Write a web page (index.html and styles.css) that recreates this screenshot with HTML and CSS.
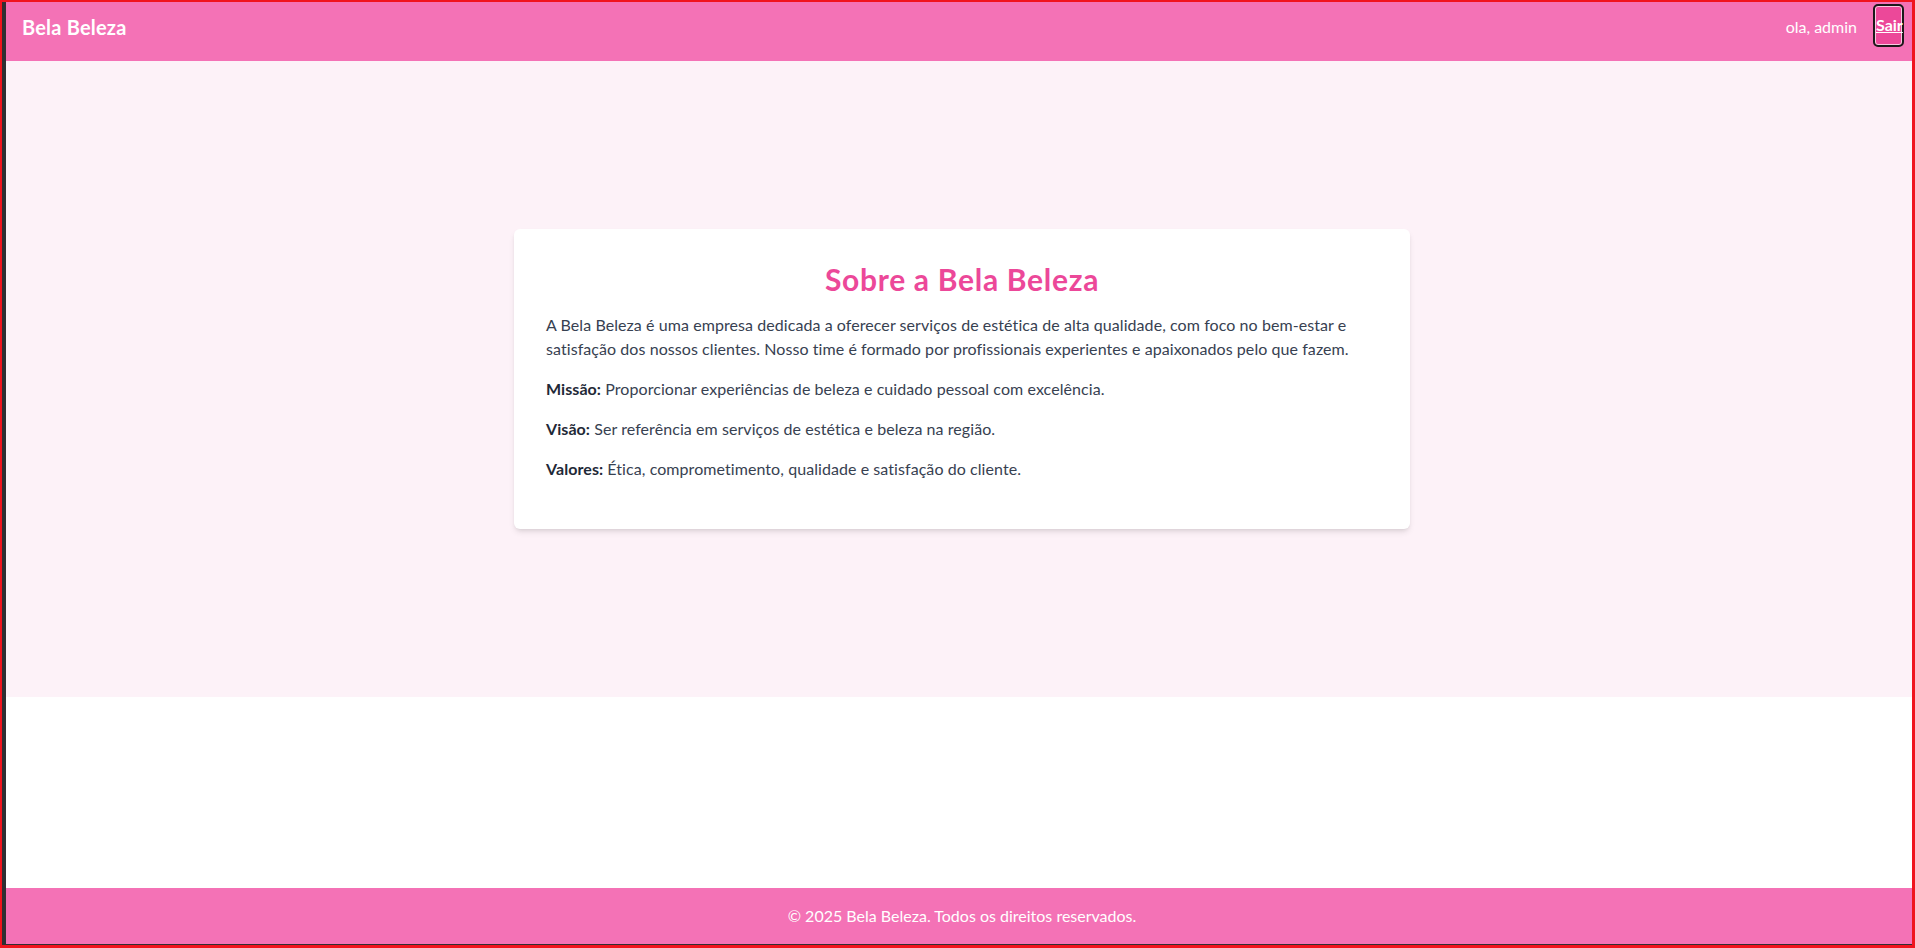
FILE: index.html
```html
<!DOCTYPE html>
<html lang="pt-BR">
<head>
<meta charset="utf-8">
<title>Sobre - Bela Beleza</title>
<link rel="stylesheet" href="styles.css">
</head>
<body>
<div class="screen">
  <div class="page">
    <header class="topbar">
      <div class="brand">Bela Beleza</div>
      <div class="user-area">
        <span class="greeting">ola, admin</span>
        <button class="logout">Sair</button>
      </div>
    </header>
    <main class="main">
      <section class="card">
        <h1 class="card-title">Sobre a Bela Beleza</h1>
        <p class="text">A Bela Beleza é uma empresa dedicada a oferecer serviços de estética de alta qualidade, com foco no bem-estar e satisfação dos nossos clientes. Nosso time é formado por profissionais experientes e apaixonados pelo que fazem.</p>
        <p class="text"><strong>Missão:</strong> Proporcionar experiências de beleza e cuidado pessoal com excelência.</p>
        <p class="text"><strong>Visão:</strong> Ser referência em serviços de estética e beleza na região.</p>
        <p class="text"><strong>Valores:</strong> Ética, comprometimento, qualidade e satisfação do cliente.</p>
      </section>
    </main>
    <div class="spacer"></div>
    <footer class="footer">© 2025 Bela Beleza. Todos os direitos reservados.</footer>
  </div>
  <div class="frame-border"></div>
</div>
</body>
</html>
```
FILE: styles.css
```css
* { box-sizing: border-box; }
html, body { margin: 0; padding: 0; }
body { font-family: Lato, "Liberation Sans", sans-serif; }

.screen {
  position: relative;
  width: 1915px;
  height: 948px;
  overflow: hidden;
  background: #2f2f33;
  padding: 2px 0 0 6px;
}
.page {
  width: 1912px;
  height: 942px;
  display: flex;
  flex-direction: column;
  background: #ffffff;
}
.frame-border {
  position: absolute;
  inset: 0;
  border-style: solid;
  border-color: #f0141e;
  border-width: 2px 3px 3px 2px;
  pointer-events: none;
}

.topbar {
  height: 59px;
  flex: none;
  background: #f472b6;
  color: #ffffff;
  display: flex;
  justify-content: space-between;
  align-items: center;
  padding: 2px 14px 12px 16px;
}
.brand {
  font-size: 20px;
  line-height: 28px;
  font-weight: 700;
  letter-spacing: 0.2px;
}
.user-area {
  display: flex;
  align-items: center;
  gap: 16px;
}
.greeting {
  font-size: 16px;
  line-height: 24px;
}
.logout {
  width: 31px;
  height: 43px;
  padding: 0 0 2px 1px;
  margin-top: -2px;
  background: #ec4899;
  color: #ffffff;
  font-family: Lato, "Liberation Sans", sans-serif;
  font-weight: 700;
  font-size: 16px;
  text-decoration: underline;
  border: 2px solid #1a1a1a;
  border-radius: 5px;
  box-shadow: inset 0 0 0 1px rgba(255,255,255,0.7);
  display: flex;
  align-items: center;
  justify-content: flex-start;
  overflow: visible;
  white-space: nowrap;
}

.main {
  height: 636px;
  flex: none;
  background: #fdf2f8;
  display: flex;
  align-items: center;
  justify-content: center;
}
.card {
  width: 896px;
  background: #ffffff;
  border-radius: 6px;
  padding: 32px;
  box-shadow: 0 4px 6px -1px rgba(0,0,0,0.1), 0 2px 4px -2px rgba(0,0,0,0.1);
}
.card-title {
  margin: 0 0 16px;
  font-size: 30px;
  line-height: 36px;
  font-weight: 700;
  color: #ec4899;
  text-align: center;
  letter-spacing: 0.7px;
}
.text {
  margin: 0 0 16px;
  font-size: 16px;
  line-height: 24px;
  color: #374151;
  letter-spacing: 0.07px;
}
.text strong {
  color: #1f2937;
  font-weight: 700;
}

.spacer {
  flex: 1;
  background: #ffffff;
}
.footer {
  height: 56px;
  flex: none;
  background: #f472b6;
  color: #ffffff;
  text-align: center;
  font-size: 16px;
  line-height: 24px;
  padding: 16px;
}
```
